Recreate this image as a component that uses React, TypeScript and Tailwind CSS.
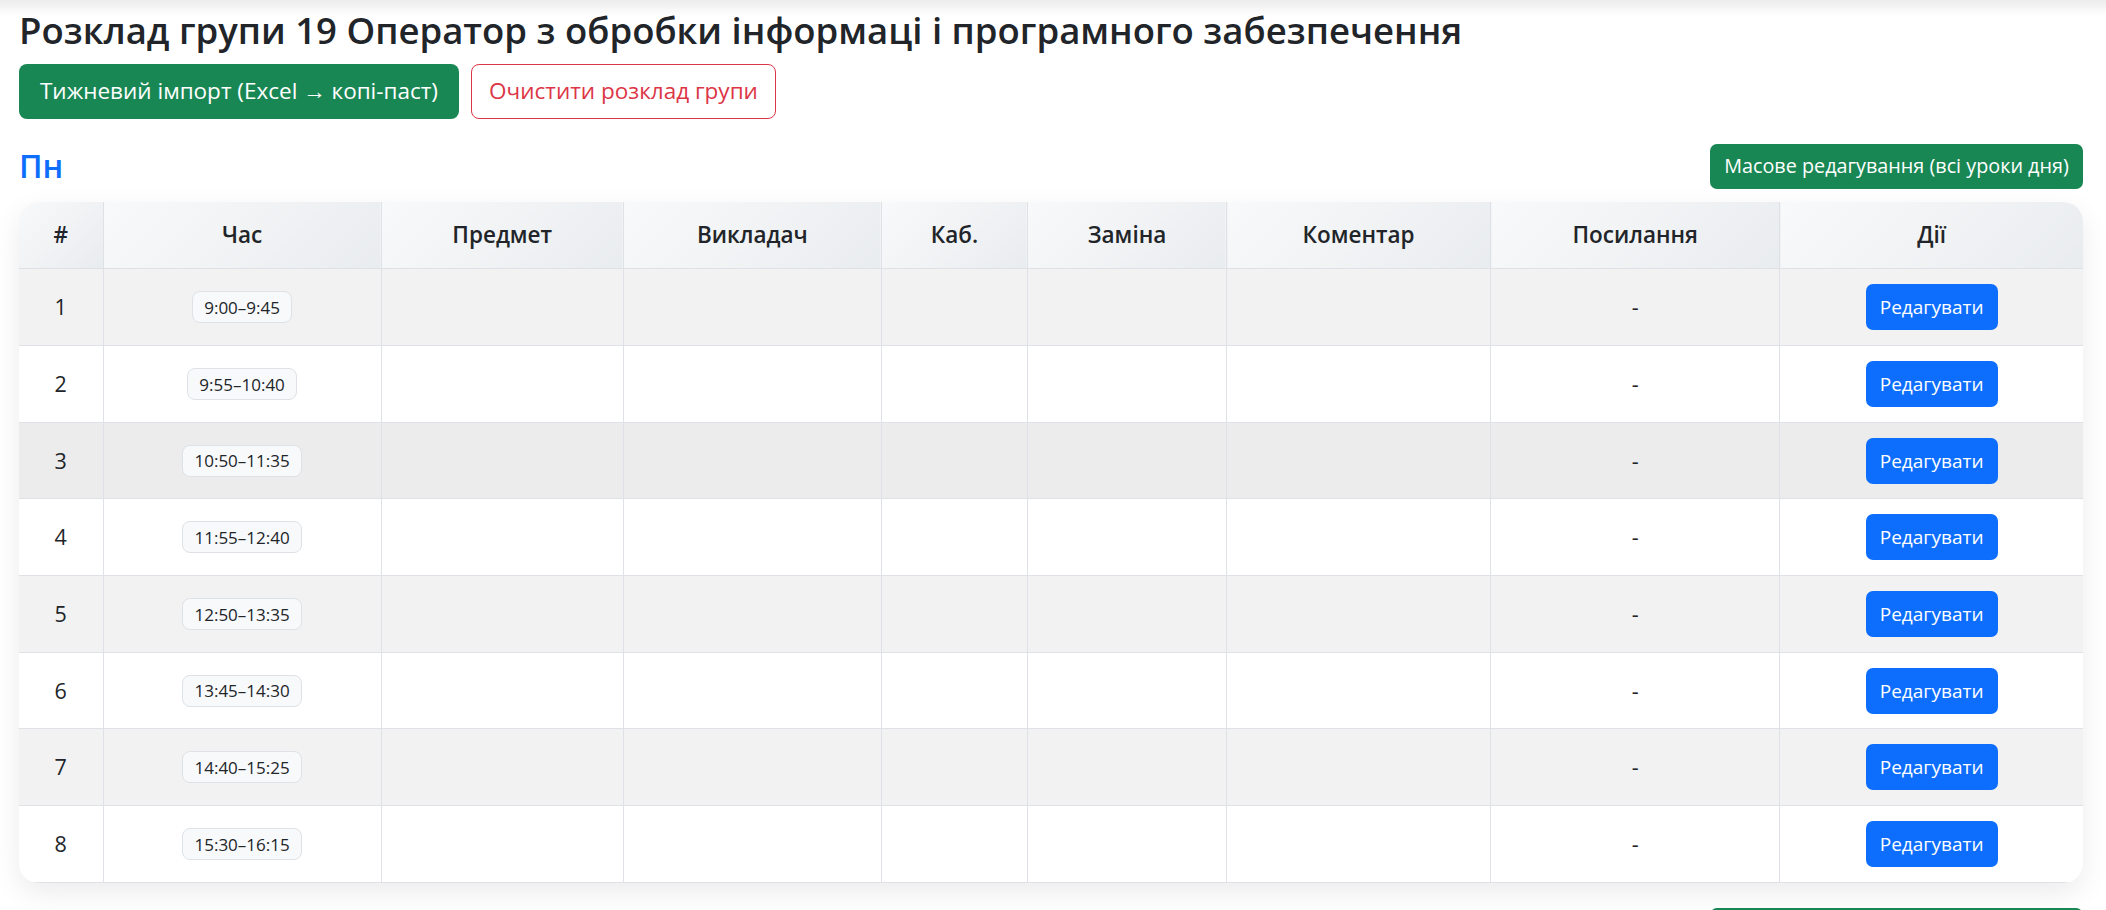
const times = [
  '9:00–9:45',
  '9:55–10:40',
  '10:50–11:35',
  '11:55–12:40',
  '12:50–13:35',
  '13:45–14:30',
  '14:40–15:25',
  '15:30–16:15',
];

const columns = [
  { label: '#', width: 'w-[84px]' },
  { label: 'Час', width: 'w-[278px]' },
  { label: 'Предмет', width: 'w-[242px]' },
  { label: 'Викладач', width: 'w-[258px]' },
  { label: 'Каб.', width: 'w-[146px]' },
  { label: 'Заміна', width: 'w-[199px]' },
  { label: 'Коментар', width: 'w-[264px]' },
  { label: 'Посилання', width: 'w-[289px]' },
  { label: 'Дії', width: 'w-[303px]' },
];

// striped rows, the third one carries the hover tint
function rowClass(i: number) {
  const h = i % 3 === 2 ? 'h-[76px]' : 'h-[77px]';
  if (i === 2) return `${h} bg-[#ececec]`;
  return i % 2 === 0 ? `${h} bg-[#f2f2f2]` : `${h} bg-white`;
}

function DayTable() {
  return (
    <div className="mt-[13px] overflow-hidden rounded-[20px] bg-white shadow-[0_10px_28px_rgba(0,0,0,0.08)]">
      <table className="w-full table-fixed border-collapse">
        <colgroup>
          {columns.map((c) => (
            <col key={c.label} className={c.width} />
          ))}
        </colgroup>
        <thead>
          <tr className="h-[67px]">
            {columns.map((c) => (
              <th
                key={c.label}
                className="border-b border-r border-[#dee2e6] bg-[linear-gradient(135deg,#f8f9fa,#e9ecef)] text-center text-[22.5px] font-semibold text-[#212529] last:border-r-0"
              >
                {c.label}
              </th>
            ))}
          </tr>
        </thead>
        <tbody>
          {times.map((t, i) => (
            <tr key={t} className={rowClass(i)}>
              <td className="border-b border-r border-[#dee2e6] text-center text-[21.5px]">{i + 1}</td>
              <td className="border-b border-r border-[#dee2e6] text-center">
                <span className="inline-flex h-[32px] items-center rounded-[8px] border border-[#dee2e6] bg-[#f8f9fa] px-[11px] text-[17px] font-medium text-[#212529]">
                  {t}
                </span>
              </td>
              <td className="border-b border-r border-[#dee2e6]" />
              <td className="border-b border-r border-[#dee2e6]" />
              <td className="border-b border-r border-[#dee2e6]" />
              <td className="border-b border-r border-[#dee2e6]" />
              <td className="border-b border-r border-[#dee2e6]" />
              <td className="border-b border-r border-[#dee2e6] text-center text-[21.5px]">-</td>
              <td className="border-b border-[#dee2e6] text-center">
                <button className="h-[46px] w-[132px] rounded-[7px] bg-[#0d6efd] text-[19px] text-white">
                  Редагувати
                </button>
              </td>
            </tr>
          ))}
        </tbody>
      </table>
    </div>
  );
}

function DayHeader({ name }: { name: string }) {
  return (
    <div className="flex items-center justify-between">
      <h2 className="text-[32px] font-semibold leading-[1.2] text-[#0d6efd]">{name}</h2>
      <button className="h-[45px] w-[373px] rounded-[7px] bg-[#198754] text-[19.8px] text-white">
        Масове редагування (всі уроки дня)
      </button>
    </div>
  );
}

export default function App() {
  return (
    <div className="min-h-screen bg-[linear-gradient(to_bottom,#ececec,#ffffff_16px)] pl-[19px] pr-[23px] font-['Open_Sans','Noto_Sans',sans-serif] text-[#212529]">
      <h1 className="pt-[9px] text-[36.5px] font-semibold leading-[1.2] text-[#212529]">
        Розклад групи 19 Оператор з обробки інформаці і програмного забезпечення
      </h1>
      <div className="mt-[11px] flex gap-[12px]">
        <button className="h-[55px] w-[440px] rounded-[8px] bg-[#198754] text-[22.5px] text-white">
          Тижневий імпорт (Excel → копі-паст)
        </button>
        <button className="h-[55px] w-[305px] rounded-[8px] border border-[#dc3545] bg-white text-[22.5px] text-[#dc3545]">
          Очистити розклад групи
        </button>
      </div>

      <div className="mt-[25px]">
        <DayHeader name="Пн" />
        <DayTable />
      </div>

      <div className="mt-[25px] pb-[30px]">
        <DayHeader name="Вт" />
        <DayTable />
      </div>
    </div>
  );
}
